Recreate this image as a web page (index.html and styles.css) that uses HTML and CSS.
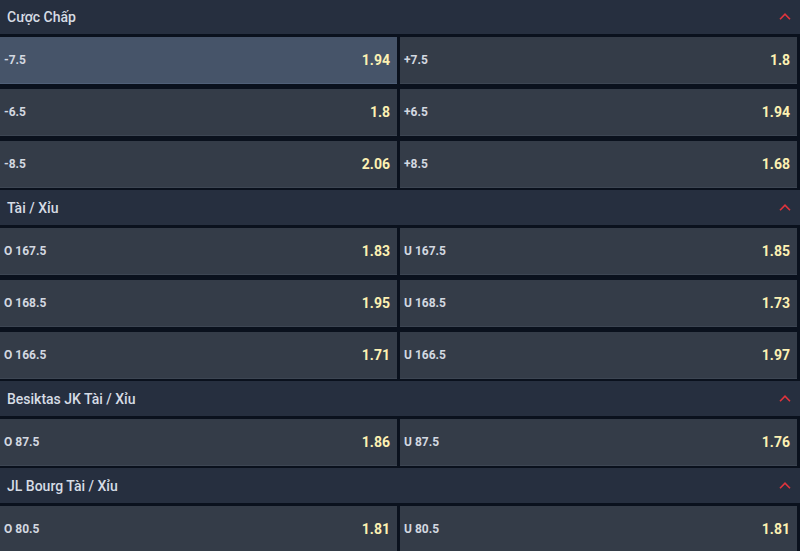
FILE: index.html
```html
<!DOCTYPE html>
<html lang="vi">
<head>
<meta charset="utf-8">
<link rel="stylesheet" href="styles.css">
</head>
<body>
<div class="markets">
  <section class="market">
    <div class="market-head">
      <span class="market-title">Cược Chấp</span>
      <svg class="chev" width="12" height="7" viewBox="0 0 12 7"><path d="M1 6.2 L6 1.2 L11 6.2" fill="none" stroke="#e0343d" stroke-width="1.6"/></svg>
    </div>
    <div class="grid">
      <div class="cell active"><span class="lbl">-7.5</span><span class="odd">1.94</span></div>
      <div class="cell"><span class="lbl">+7.5</span><span class="odd">1.8</span></div>
      <div class="cell"><span class="lbl">-6.5</span><span class="odd">1.8</span></div>
      <div class="cell"><span class="lbl">+6.5</span><span class="odd">1.94</span></div>
      <div class="cell"><span class="lbl">-8.5</span><span class="odd">2.06</span></div>
      <div class="cell"><span class="lbl">+8.5</span><span class="odd">1.68</span></div>
    </div>
  </section>
  <section class="market">
    <div class="market-head">
      <span class="market-title">Tài / Xỉu</span>
      <svg class="chev" width="12" height="7" viewBox="0 0 12 7"><path d="M1 6.2 L6 1.2 L11 6.2" fill="none" stroke="#e0343d" stroke-width="1.6"/></svg>
    </div>
    <div class="grid">
      <div class="cell"><span class="lbl">O 167.5</span><span class="odd">1.83</span></div>
      <div class="cell"><span class="lbl">U 167.5</span><span class="odd">1.85</span></div>
      <div class="cell"><span class="lbl">O 168.5</span><span class="odd">1.95</span></div>
      <div class="cell"><span class="lbl">U 168.5</span><span class="odd">1.73</span></div>
      <div class="cell"><span class="lbl">O 166.5</span><span class="odd">1.71</span></div>
      <div class="cell"><span class="lbl">U 166.5</span><span class="odd">1.97</span></div>
    </div>
  </section>
  <section class="market">
    <div class="market-head">
      <span class="market-title">Besiktas JK Tài / Xỉu</span>
      <svg class="chev" width="12" height="7" viewBox="0 0 12 7"><path d="M1 6.2 L6 1.2 L11 6.2" fill="none" stroke="#e0343d" stroke-width="1.6"/></svg>
    </div>
    <div class="grid">
      <div class="cell"><span class="lbl">O 87.5</span><span class="odd">1.86</span></div>
      <div class="cell"><span class="lbl">U 87.5</span><span class="odd">1.76</span></div>
    </div>
  </section>
  <section class="market">
    <div class="market-head">
      <span class="market-title">JL Bourg Tài / Xỉu</span>
      <svg class="chev" width="12" height="7" viewBox="0 0 12 7"><path d="M1 6.2 L6 1.2 L11 6.2" fill="none" stroke="#e0343d" stroke-width="1.6"/></svg>
    </div>
    <div class="grid">
      <div class="cell"><span class="lbl">O 80.5</span><span class="odd">1.81</span></div>
      <div class="cell"><span class="lbl">U 80.5</span><span class="odd">1.81</span></div>
    </div>
  </section>
</div>
</body>
</html>
```
FILE: styles.css
```css
html, body {
  margin: 0;
  padding: 0;
  background: #0a111d;
  overflow: hidden;
}
body {
  font-family: Roboto, "Liberation Sans", Arial, sans-serif;
}
.markets {
  margin-top: -1px;
  display: flex;
  flex-direction: column;
}
.market-head {
  height: 35px;
  background: #262f3f;
  display: flex;
  align-items: center;
  justify-content: space-between;
  padding: 0 9px 0 7px;
}
.market-title {
  color: #d6dce5;
  font-size: 14px;
  font-weight: 500;
}
.chev {
  display: block;
  margin-top: 0;
}
.grid {
  display: grid;
  grid-template-columns: 1fr 1fr;
  column-gap: 3px;
  row-gap: 5px;
  padding: 3px 3px 2px 0;
}
.cell {
  height: 47px;
  box-sizing: border-box;
  background: #343c48;
  border-bottom: 1px solid #3d4653;
  display: flex;
  align-items: center;
  justify-content: space-between;
  padding: 0 7px 0 4px;
}
.cell.active {
  background: #465469;
  border-bottom-color: #506078;
}
.lbl {
  color: #d3d8e0;
  font-size: 12px;
  font-weight: 700;
}
.odd {
  color: #fdf1b3;
  font-size: 14px;
  font-weight: 700;
}
```
